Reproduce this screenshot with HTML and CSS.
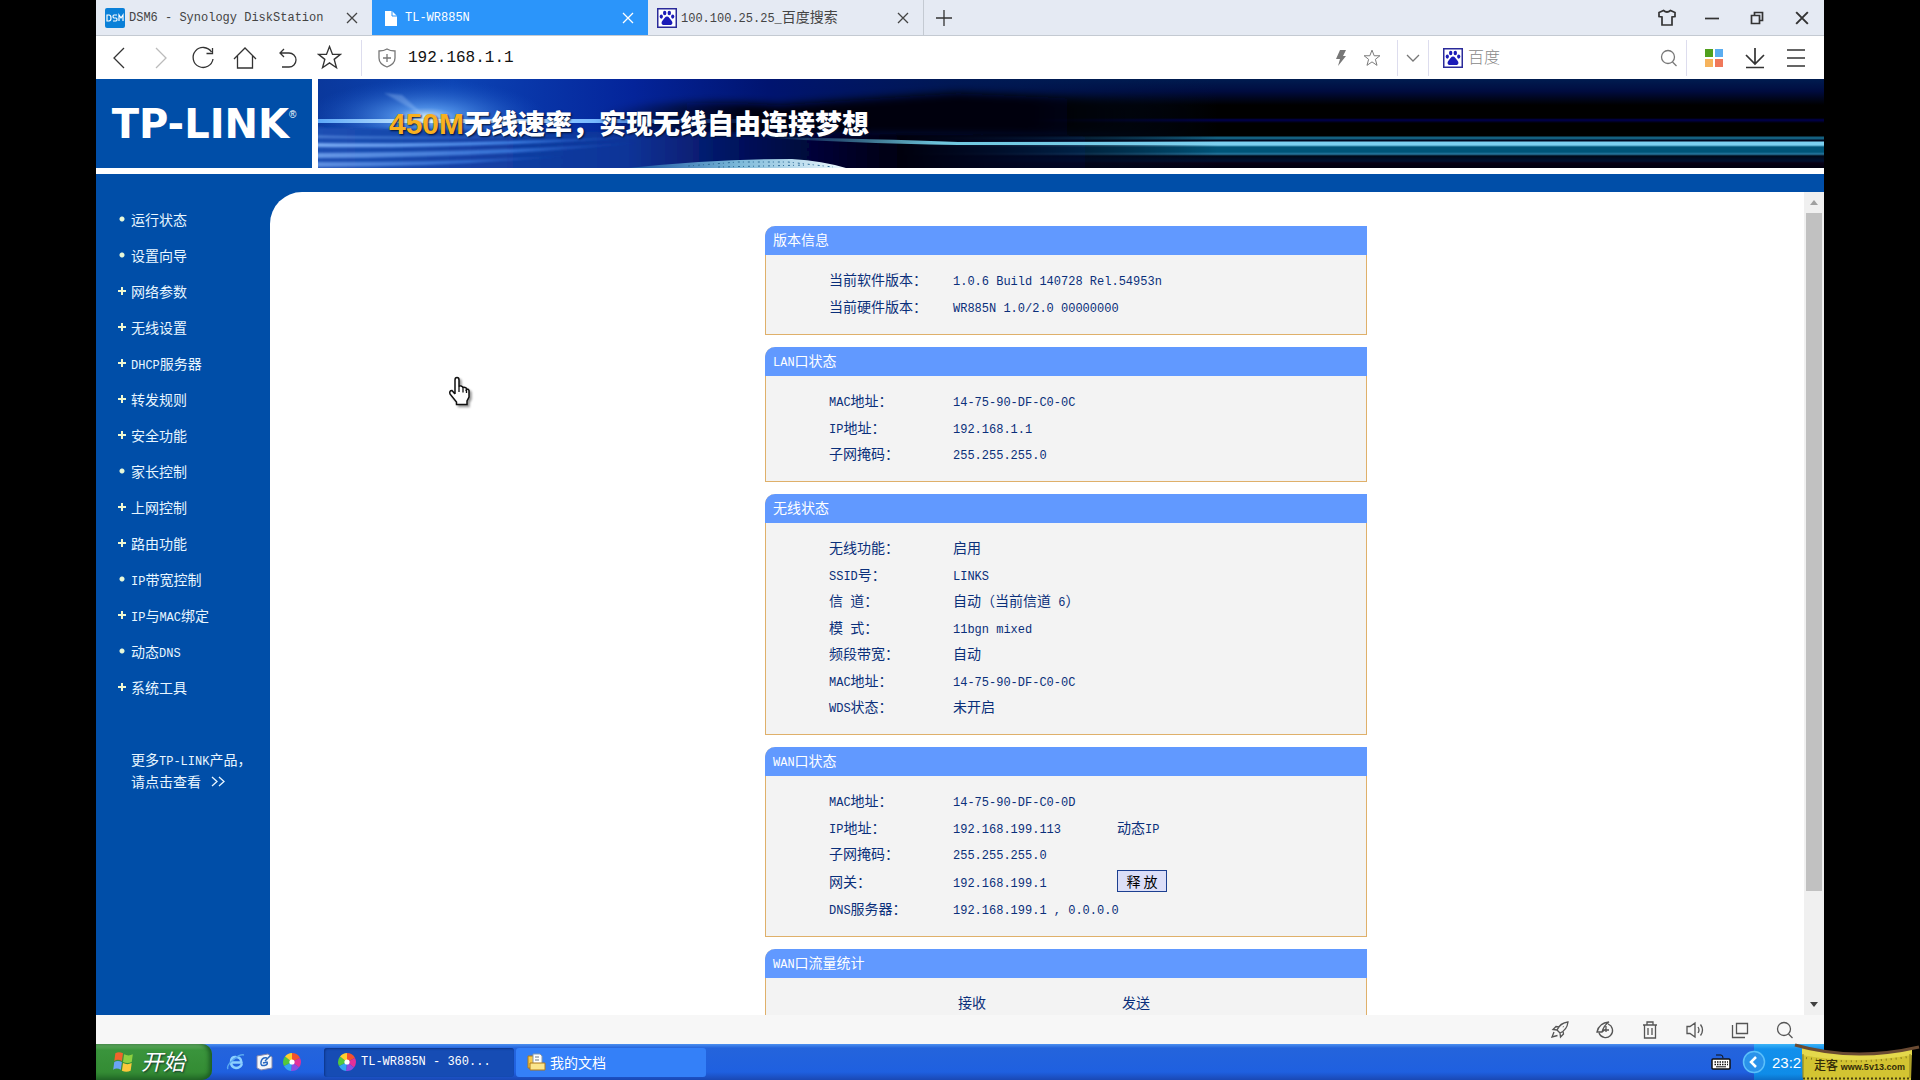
FILE: index.html
```html
<!DOCTYPE html>
<html lang="zh-CN">
<head>
<meta charset="utf-8">
<title>TL-WR885N</title>
<link rel="stylesheet" href="styles.css">
</head>
<body>
<svg width="0" height="0" class="defs" aria-hidden="true">
  <defs>
    <symbol id="close" viewBox="0 0 12 12"><path d="M1 1L11 11M11 1L1 11"/></symbol>
    <symbol id="star" viewBox="0 0 24 24"><path d="M12 1.500L14.900 9H22.500L16.500 13.800L18.700 21.800L12 17.200L5.300 21.800L7.500 13.800L1.500 9H9.100Z"/></symbol>
    <symbol id="paw" viewBox="0 0 20 20"><rect x=".75" y=".75" width="18.500" height="18.500" fill="#fff" stroke="#2a2a9a" stroke-width="1.500"/><g fill="#1b1bb8"><ellipse cx="7.700" cy="5" rx="1.700" ry="2.300"/><ellipse cx="12.300" cy="5" rx="1.700" ry="2.300"/><ellipse cx="4.300" cy="8.600" rx="1.600" ry="2.100"/><ellipse cx="15.700" cy="8.600" rx="1.600" ry="2.100"/><path d="M10 8.500C12 8.500 12.500 10.500 14 12C16.500 14.500 15.500 17.500 12.500 17H7.500C4.500 17.500 3.500 14.500 6 12C7.500 10.500 8 8.500 10 8.500Z"/></g></symbol>
    <symbol id="search" viewBox="0 0 18 18"><circle cx="8" cy="8" r="6.500"/><path d="M12.500 13L16.500 17"/></symbol>
    <symbol id="wheel" viewBox="0 0 20 20"><path d="M10 10L10 1A9 9 0 0 1 18 6Z" fill="#f3512d"/><path d="M10 10L18 6A9 9 0 0 1 17 15.500Z" fill="#e3309a"/><path d="M10 10L17 15.500A9 9 0 0 1 9 19Z" fill="#8e4be0"/><path d="M10 10L9 19A9 9 0 0 1 2 14Z" fill="#35a4f3"/><path d="M10 10L2 14A9 9 0 0 1 3 4.500Z" fill="#54c83a"/><path d="M10 10L3 4.500A9 9 0 0 1 10 1Z" fill="#ffcf2e"/><circle cx="10" cy="10" r="2.600" fill="#fff"/></symbol>
  </defs>
</svg>

<div class="screen">
  <header class="tabstrip">
    <div class="tab">
      <svg class="tab-icon" viewBox="0 0 20 20"><rect width="20" height="20" rx="2" fill="#0a80d8"/><path d="M2 7V13H4Q6 13 6 10T4 7ZM12 7H9Q8 7 8 8.500T9 10H11Q12 10 12 11.500T11 13H8M14 13V7L16 10L18 7V13" fill="none" stroke="#fff" stroke-width="1.200"/></svg>
      <span class="tab-title">DSM6 - Synology DiskStation</span>
      <button class="tab-close" aria-label="关闭"><svg class="line" viewBox="0 0 12 12"><use href="#close"/></svg></button>
    </div>
    <div class="tab active">
      <svg class="tab-icon" viewBox="0 0 20 20"><path d="M4 3H11L16 8V18H4Z" fill="#fff"/><path d="M11 3V8H16" fill="none" stroke="#2b95fa"/></svg>
      <span class="tab-title">TL-WR885N</span>
      <button class="tab-close" aria-label="关闭"><svg class="line" viewBox="0 0 12 12"><use href="#close"/></svg></button>
    </div>
    <div class="tab last">
      <svg class="tab-icon" viewBox="0 0 20 20"><use href="#paw"/></svg>
      <span class="tab-title">100.100.25.25_<span class="han">百度搜索</span></span>
      <button class="tab-close" aria-label="关闭"><svg class="line" viewBox="0 0 12 12"><use href="#close"/></svg></button>
    </div>
    <button class="new-tab" aria-label="新标签页"><svg class="line" width="16" height="16" viewBox="0 0 16 16"><path d="M8 0V16M0 8H16"/></svg></button>
    <div class="window-buttons">
      <button aria-label="皮肤"><svg class="line bold" width="18" height="18" viewBox="0 0 18 18"><path d="M5.500 1.500Q9 4.500 12.500 1.500L17 3.500V7.500L14 8V16H4V8L1 7.500V3.500Z"/></svg></button>
      <button aria-label="最小化"><svg class="line bold" width="16" height="16" viewBox="0 0 16 16"><path d="M1 8.500H15"/></svg></button>
      <button aria-label="还原"><svg class="line bold" width="14" height="14" viewBox="0 0 14 14"><path d="M1.500 4.500H9.500V12.500H1.500ZM4.500 4V1.500H12.500V9.500H10"/></svg></button>
      <button aria-label="关闭窗口"><svg class="line bold" width="14" height="14" viewBox="0 0 12 12"><use href="#close"/></svg></button>
    </div>
  </header>

  <div class="toolbar">
    <div class="nav">
      <button aria-label="后退"><svg class="line" width="24" height="24" viewBox="0 0 24 24"><path d="M17 2L7 12L17 22"/></svg></button>
      <button class="dim" aria-label="前进"><svg class="line" width="24" height="24" viewBox="0 0 24 24"><path d="M7 2L17 12L7 22"/></svg></button>
      <button aria-label="刷新"><svg class="line" width="24" height="24" viewBox="0 0 24 24"><path d="M20.500 6A10 10 0 1 0 22 13M21.500 2V7.500H15.500"/></svg></button>
      <button aria-label="主页"><svg class="line" width="24" height="24" viewBox="0 0 24 24"><path d="M1 13L12 2L23 13M4.500 10V22H19.500V10"/></svg></button>
      <button aria-label="撤销"><svg class="line" width="24" height="24" viewBox="0 0 24 24"><path d="M9 3L5 7L9 11M5 7H14A7 7 0 0 1 14 21H7"/></svg></button>
      <button aria-label="收藏"><svg class="line" width="25" height="25" viewBox="0 0 24 24"><use href="#star"/></svg></button>
    </div>
    <div class="address">
      <svg class="line grey" width="18" height="20" viewBox="0 0 18 20"><path d="M9 1Q12 3 17 3V10Q17 16 9 19Q1 16 1 10V3Q6 3 9 1ZM9 6V14M5 10H13"/></svg>
      <input class="url" type="text" value="192.168.1.1" aria-label="地址">
      <button class="grey" aria-label="极速模式"><svg width="12" height="18" viewBox="0 0 12 18"><path d="M5 1H11L8 7H11L3 17L5 10H1Z" fill="#777"/></svg></button>
      <button class="grey" aria-label="加入收藏"><svg class="line" width="18" height="18" viewBox="0 0 24 24"><use href="#star"/></svg></button>
    </div>
    <button class="dropdown grey" aria-label="展开"><svg class="line" width="14" height="8" viewBox="0 0 14 8"><path d="M1 1L7 7L13 1"/></svg></button>
    <div class="searchbox">
      <svg width="20" height="20" viewBox="0 0 20 20"><use href="#paw"/></svg>
      <input class="query" type="text" placeholder="百度" aria-label="搜索">
      <button class="grey" aria-label="搜索"><svg class="line" width="18" height="18" viewBox="0 0 18 18"><use href="#search"/></svg></button>
    </div>
    <div class="tools">
      <button aria-label="扩展"><svg width="20" height="20" viewBox="0 0 20 20"><path d="M1 1H9V9H1Z" fill="#50a01e"/><path d="M11 1H19V9H11Z" fill="#5badf0"/><path d="M1 11H9V19H1Z" fill="#f6b35c"/><path d="M11 11H19V19H11Z" fill="#f0785a"/></svg></button>
      <button aria-label="下载"><svg class="line bold" width="20" height="22" viewBox="0 0 20 22"><path d="M10 1V17M1 8L10 17L19 8M1 20.500H19"/></svg></button>
      <button aria-label="菜单"><svg class="line bold" width="20" height="20" viewBox="0 0 20 20"><path d="M1 2H19M1 10H19M1 18H19"/></svg></button>
    </div>
  </div>

  <div class="brand">
    <div class="logo">TP-LINK<sup>®</sup></div>
    <div class="banner">
      <svg class="banner-art" width="900" height="89" viewBox="0 0 900 89">
        <defs>
          <linearGradient id="sky" x2="1"><stop offset="0" stop-color="#0a389c"/><stop offset=".15" stop-color="#0c44b4"/><stop offset=".35" stop-color="#04249a"/><stop offset=".5" stop-color="#001470"/><stop offset=".7" stop-color="#001858" stop-opacity=".8"/><stop offset="1" stop-color="#001c50" stop-opacity="0"/></linearGradient>
          <linearGradient id="night" x2="1"><stop offset="0" stop-color="#000010" stop-opacity="0"/><stop offset=".25" stop-color="#000008"/><stop offset=".7" stop-color="#000008"/><stop offset="1" stop-color="#000008" stop-opacity="0"/></linearGradient>
          <linearGradient id="sea" x2="1"><stop offset="0" stop-color="#1c50b4"/><stop offset=".35" stop-color="#0c3498"/><stop offset=".5" stop-color="#020a50"/><stop offset=".65" stop-color="#000010"/><stop offset="1" stop-color="#000010" stop-opacity="0"/></linearGradient>
          <linearGradient id="wave" x2="1"><stop offset="0" stop-color="#7cacf4"/><stop offset=".6" stop-color="#3c7ce0"/><stop offset="1" stop-color="#1c50c0" stop-opacity="0"/></linearGradient>
          <linearGradient id="teal" x2="1"><stop offset="0" stop-color="#50b0d0" stop-opacity="0"/><stop offset=".4" stop-color="#70c8e0"/><stop offset="1" stop-color="#7cd0f0"/></linearGradient>
          <radialGradient id="glow"><stop offset="0" stop-color="#d8f0ff"/><stop offset=".25" stop-color="#5a9df0" stop-opacity=".8"/><stop offset="1" stop-color="#1650c0" stop-opacity="0"/></radialGradient>
          <linearGradient id="beam" x2="1"><stop offset="0" stop-color="#5ca8f8"/><stop offset=".25" stop-color="#d8f2ff"/><stop offset=".6" stop-color="#78b8ff"/><stop offset="1" stop-color="#2050c0" stop-opacity="0"/></linearGradient>
          <linearGradient id="sand" x2="1"><stop offset="0" stop-color="#1450a0"/><stop offset=".5" stop-color="#7ab8d8"/><stop offset="1" stop-color="#f0faff"/></linearGradient>
          <filter id="soft" x="-5%" y="-30%" width="110%" height="160%"><feGaussianBlur stdDeviation="4"/></filter>
          <filter id="haze" x="-5%" y="-30%" width="110%" height="160%"><feGaussianBlur stdDeviation="1"/></filter>
        </defs>
        <rect width="900" height="89" fill="url(#sky)"/>
        <path d="M280 34Q360 18 460 26L640 14Q760 20 900 24V56H280Z" fill="url(#night)" filter="url(#soft)"/>
        <ellipse cx="108" cy="38" rx="120" ry="38" fill="url(#glow)"/>
        <path d="M66 14L108 38L84 16Z" fill="#b0d4ff" opacity=".3" filter="url(#haze)"/>
        <path d="M-9 48Q150 52 420 54L900 57V99H-9Z" fill="url(#sea)" filter="url(#haze)"/>
        <g fill="url(#wave)" filter="url(#haze)">
          <path d="M-9 64Q120 66 340 57Q150 70 -9 68Z"/>
          <path d="M-9 74Q150 74 330 63Q180 79 -9 79Z" opacity=".8"/>
          <path d="M-9 83Q120 84 260 76Q120 89 -9 88Z" opacity=".7"/>
          <path d="M-9 56Q160 60 300 54Q160 62 -9 59Z" opacity=".5"/>
        </g>
        <rect y="40" width="460" height="4" fill="url(#beam)"/>
        <path d="M440 58Q560 60 640 63H900V66H640Q520 64 440 58Z" fill="url(#teal)"/>
        <path d="M310 89Q400 80 474 80Q505 82 528 89Z" fill="url(#sand)"/>
        <path d="M370 87L420 83L470 83L515 88M400 88L490 86" stroke="#2d6c98" stroke-dasharray="2 3 1 4" fill="none"/>
      </svg>
      <p class="slogan"><span class="speed">450M</span>无线速率，实现无线自由连接梦想</p>
    </div>
  </div>
  <div class="blue-bar"></div>

  <div class="workspace">
    <nav class="sidebar">
      <ul class="menu">
        <li><a class="dot" href="#">运行状态</a></li>
        <li><a class="dot" href="#">设置向导</a></li>
        <li><a class="plus" href="#">网络参数</a></li>
        <li><a class="plus" href="#">无线设置</a></li>
        <li><a class="plus" href="#"><span><span class="lat">DHCP</span>服务器</span></a></li>
        <li><a class="plus" href="#">转发规则</a></li>
        <li><a class="plus" href="#">安全功能</a></li>
        <li><a class="dot" href="#">家长控制</a></li>
        <li><a class="plus" href="#">上网控制</a></li>
        <li><a class="plus" href="#">路由功能</a></li>
        <li><a class="dot" href="#"><span><span class="lat">IP</span>带宽控制</span></a></li>
        <li><a class="plus" href="#"><span><span class="lat">IP</span>与<span class="lat">MAC</span>绑定</span></a></li>
        <li><a class="dot" href="#"><span>动态<span class="lat">DNS</span></span></a></li>
        <li><a class="plus" href="#">系统工具</a></li>
      </ul>
      <a class="more" href="#">更多<span class="lat">TP-LINK</span>产品，<br>请点击查看<svg class="line" width="15" height="11" viewBox="0 0 15 11"><path d="M1 1L6 5.500L1 10M8 1L13 5.500L8 10"/></svg></a>
    </nav>
    <main class="content">
      <div class="cards">
        <section class="card">
          <h2>版本信息</h2>
          <table>
            <tr><th scope="row">当前软件版本：</th><td colspan="2"><span class="lat">1.0.6 Build 140728 Rel.54953n</span></td></tr>
            <tr><th scope="row">当前硬件版本：</th><td colspan="2"><span class="lat">WR885N 1.0/2.0 00000000</span></td></tr>
          </table>
        </section>
        <section class="card">
          <h2><span class="lat">LAN</span>口状态</h2>
          <table>
            <tr><th scope="row"><span class="lat">MAC</span>地址：</th><td colspan="2"><span class="lat">14-75-90-DF-C0-0C</span></td></tr>
            <tr><th scope="row"><span class="lat">IP</span>地址：</th><td colspan="2"><span class="lat">192.168.1.1</span></td></tr>
            <tr><th scope="row">子网掩码：</th><td colspan="2"><span class="lat">255.255.255.0</span></td></tr>
          </table>
        </section>
        <section class="card">
          <h2>无线状态</h2>
          <table>
            <tr><th scope="row">无线功能：</th><td colspan="2">启用</td></tr>
            <tr><th scope="row"><span class="lat">SSID</span>号：</th><td colspan="2"><span class="lat">LINKS</span></td></tr>
            <tr><th scope="row">信<span class="lat"> </span>道：</th><td colspan="2">自动（当前信道<span class="lat"> 6</span>）</td></tr>
            <tr><th scope="row">模<span class="lat"> </span>式：</th><td colspan="2"><span class="lat">11bgn mixed</span></td></tr>
            <tr><th scope="row">频段带宽：</th><td colspan="2">自动</td></tr>
            <tr><th scope="row"><span class="lat">MAC</span>地址：</th><td colspan="2"><span class="lat">14-75-90-DF-C0-0C</span></td></tr>
            <tr><th scope="row"><span class="lat">WDS</span>状态：</th><td colspan="2">未开启</td></tr>
          </table>
        </section>
        <section class="card">
          <h2><span class="lat">WAN</span>口状态</h2>
          <table>
            <tr><th scope="row"><span class="lat">MAC</span>地址：</th><td colspan="2"><span class="lat">14-75-90-DF-C0-0D</span></td></tr>
            <tr><th scope="row"><span class="lat">IP</span>地址：</th><td class="value"><span class="lat">192.168.199.113</span></td><td>动态<span class="lat">IP</span></td></tr>
            <tr><th scope="row">子网掩码：</th><td colspan="2"><span class="lat">255.255.255.0</span></td></tr>
            <tr><th scope="row">网关：</th><td class="value"><span class="lat">192.168.199.1</span></td><td><button class="release">释 放</button></td></tr>
            <tr><th scope="row"><span class="lat">DNS</span>服务器：</th><td colspan="2"><span class="lat">192.168.199.1 , 0.0.0.0</span></td></tr>
          </table>
        </section>
        <section class="card">
          <h2><span class="lat">WAN</span>口流量统计</h2>
          <table class="traffic">
            <tr><td class="blank"></td><th class="value" scope="col">接收</th><th scope="col">发送</th></tr>
          </table>
        </section>
      </div>
      <div class="scrollbar">
        <svg width="8" height="5" viewBox="0 0 8 5"><path d="M4 0L8 5H0Z" fill="#a0a0a0"/></svg>
        <div class="thumb"></div>
        <svg width="8" height="5" viewBox="0 0 8 5"><path d="M4 5L8 0H0Z" fill="#404040"/></svg>
      </div>
      <svg class="pointer" width="24" height="32" viewBox="0 0 24 32"><path d="M7 18V4Q7 1.500 9 1.500T11 4V11Q11 9.500 13 10T15 12Q15 11 17 11.500T18.500 13.500Q20 12.500 21 14.500V21L19 25V28.500H8.500V26L2 18Q1 14.500 4 14.500L7 18" fill="#fff" stroke="#111" stroke-width="1.500"/><path d="M11 11V16M15 12V16.500M18.500 13V17" stroke="#111" stroke-width="1.300"/></svg>
    </main>
  </div>

  <footer class="statusbar">
    <button aria-label="加速"><svg class="line" width="18" height="18" viewBox="0 0 18 18"><path d="M6 9Q9 2 17 1Q16 9 9 12ZM6 9L2 8.500L5 5.500L8 6M9 12L9.500 16L12.500 13L12 10M3 11L1 16L6.500 14.500M12 5.500L12.500 6"/></svg></button>
    <button aria-label="浏览加速"><svg class="line" width="18" height="18" viewBox="0 0 18 18"><path d="M1 11Q3 2 13 1Q8 4 6 11ZM12 3A7 7 0 1 1 3 12M6 11L10 8M10 5V11M7 9H13"/></svg></button>
    <button aria-label="清理"><svg class="line" width="16" height="18" viewBox="0 0 16 18"><path d="M1 4H15M5 4V1H11V4M2.500 4V17H13.500V4M6 7V14M10 7V14"/></svg></button>
    <button aria-label="声音"><svg class="line" width="18" height="18" viewBox="0 0 18 18"><path d="M1 5.500H4L9 2V16L4 12.500H1ZM12 6Q14 9 12 12M14.500 3.500Q18.500 9 14.500 14.500"/></svg></button>
    <button aria-label="多窗口"><svg class="line" width="18" height="18" viewBox="0 0 18 18"><path d="M5.500 2.500H16.500V12.500H5.500ZM1.500 4V16.500H14"/></svg></button>
    <button aria-label="缩放"><svg class="line" width="18" height="18" viewBox="0 0 18 18"><use href="#search"/></svg></button>
  </footer>

  <div class="taskbar">
    <button class="start">
      <svg width="24" height="24" viewBox="0 0 22 22"><path d="M4 3Q7 1 11 3L10 10Q6 8 3 10Z" fill="#f0642c"/><path d="M12 4Q16 6 20 4L19 11Q15 13 11 11Z" fill="#8ed040"/><path d="M3 11Q6 9 10 11L9 18Q5 16 2 18Z" fill="#6aa4f4"/><path d="M11 12Q15 14 19 12L18 19Q14 21 10 19Z" fill="#fac83c"/></svg>
      <span>开始</span>
    </button>
    <div class="quick">
      <button aria-label="Internet Explorer"><svg width="20" height="20" viewBox="0 0 20 20"><path d="M16 12Q14 16 10 16Q5 15.500 5 10T10 5Q15 5 15.500 10.500H6" fill="none" stroke="#8cd0ff" stroke-width="2.500"/><path d="M2 17Q0 14 7 8T18 3" fill="none" stroke="#58a8f0" stroke-width="1.500"/></svg></button>
      <button aria-label="显示桌面"><svg width="20" height="20" viewBox="0 0 20 20"><path d="M3 4L14 2L18 5V16L7 18L3 16Z" fill="#f4f6fa" stroke="#88a"/><path d="M13 6Q8 5 7 10T12 13Q14 12 13 10L9 11M11 9L17 3" fill="none" stroke="#2868c0" stroke-width="1.500"/></svg></button>
      <button aria-label="360浏览器"><svg width="20" height="20" viewBox="0 0 20 20"><use href="#wheel"/></svg></button>
    </div>
    <button class="task pressed"><svg width="20" height="20" viewBox="0 0 20 20"><use href="#wheel"/></svg><span class="lat">TL-WR885N - 360...</span></button>
    <button class="task"><svg width="20" height="20" viewBox="0 0 20 20"><path d="M2 4H9V16H2Z" fill="#f7c948" stroke="#b07818"/><path d="M7 2H14L16 4V12H7Z" fill="#fff" stroke="#89a"/><path d="M4 11H19V18H4Z" fill="#fbe58c" stroke="#b07818"/><path d="M9 5H13M9 8H13" stroke="#678"/></svg><span>我的文档</span></button>
    <svg class="keyboard" width="20" height="16" viewBox="0 0 20 16"><path d="M5 1H10Q12 1 12 4" fill="none" stroke="#111"/><rect x="1" y="5" width="18" height="10" rx="1" fill="#fff" stroke="#111" stroke-width="1.500"/><path d="M3.500 8H17M3.500 10.500H17" stroke="#111" stroke-width="1.500" stroke-dasharray="1.500 1"/><path d="M5 12.800H15" stroke="#111"/></svg>
    <div class="tray">
      <button class="expand" aria-label="显示隐藏的图标"><svg width="24" height="24" viewBox="0 0 24 24"><circle cx="12" cy="12" r="10.500" fill="#2a92ea" stroke="#5cc0fa" stroke-width="1.500"/><path d="M14 7L9 12L14 17" fill="none" stroke="#fff" stroke-width="2.500"/></svg></button>
      <span>23:2</span>
    </div>
  </div>
</div>

<div class="watermark">
  <svg class="cloth" width="126" height="37" viewBox="0 0 126 37"><path d="M8 5Q60 16 118 5L117 37H9Z" fill="#d3c432"/><path d="M8 6Q60 17 118 6V12Q60 22 8 12Z" fill="#e4d84c"/><path d="M9 35.500H117" stroke="#4a4210" stroke-width="2" stroke-dasharray="2 2"/><path d="M9 11V35M116 11V35" stroke="#8a7e1c"/><path d="M12 15Q60 22 114 14" fill="none" stroke="#8a7e1c" stroke-dasharray="1 4" stroke-width="2"/><path d="M1 2Q60 19 125 4" fill="none" stroke="#6a4a32" stroke-width="3"/></svg>
  <p>走客 <b>www.5v13.com</b></p>
</div>
</body>
</html>
```
FILE: styles.css
```css
* {
  box-sizing: border-box;
}

body {
  height: 100vh;
  margin: 0;
  padding: 0 5%;
  overflow: hidden;
  background: #000;
  font: 14px/20px "Noto Sans CJK SC", sans-serif;
  color: #333;
}

.defs {
  position: absolute;
}

button {
  display: flex;
  align-items: center;
  justify-content: center;
  padding: 0;
  border: 0;
  background: none;
  color: inherit;
  font: inherit;
}

input {
  min-width: 0;
  padding: 0;
  border: 0;
  outline: 0;
  background: none;
}

p,
h2,
ul {
  margin: 0;
  padding: 0;
}

a {
  color: inherit;
  text-decoration: none;
}

.line {
  fill: none;
  stroke: currentColor;
  stroke-width: 1.3;
}

.bold {
  stroke-width: 1.7;
}

.grey {
  color: #777;
}

.lat,
.tab-title {
  font-family: "Liberation Mono", monospace;
  font-size: 12px;
  white-space: pre;
}

.lat {
  line-height: 14px;
}

.han {
  font-family: "Noto Sans CJK SC", sans-serif;
  font-size: 14px;
}

.screen {
  display: flex;
  flex-direction: column;
  height: 100%;
  background: #fff;
}

/* Browser tabs */
.tabstrip {
  display: flex;
  flex: 0 0 36px;
  background: #e5eaf3;
  border-bottom: 1px solid #c4cad2;
}

.tab {
  display: flex;
  flex: 0 1 276px;
  align-items: center;
  gap: 4px;
  padding: 0 14px 0 9px;
  color: #444;
}

.tab.active {
  background: #2b95fa;
  color: #fff;
}

.tab.last {
  border-right: 1px solid #c4cad2;
}

.tab-icon {
  width: 20px;
  height: 20px;
}

.tab-title {
  flex: 1;
}

.tab-close svg {
  width: 12px;
  height: 12px;
}

.new-tab {
  width: 40px;
}

.window-buttons {
  display: flex;
  margin-left: auto;
}

.window-buttons button {
  width: 45px;
}

/* Address bar */
.toolbar {
  display: flex;
  flex: 0 0 43px;
  align-items: center;
}

.nav {
  display: flex;
  justify-content: space-between;
  width: 265px;
  padding: 0 19px 0 11px;
}

.dim {
  color: #bbb;
}

.address,
.searchbox,
.dropdown {
  display: flex;
  align-items: center;
  height: 36px;
  border-left: 1px solid #dde;
}

.address {
  flex: 1;
  gap: 16px;
  padding: 0 16px;
}

.url {
  flex: 1;
  margin-left: -4px;
  font: 16px "Liberation Mono", monospace;
  color: #111;
}

.dropdown {
  width: 31px;
}

.searchbox {
  gap: 5px;
  width: 259px;
  padding: 0 8px 0 14px;
  border-right: 1px solid #dde;
}

.query {
  flex: 1;
  height: 24px;
  margin-bottom: 4px;
  font: 300 16px/24px "Noto Sans CJK SC", sans-serif;
}

.query::placeholder {
  color: #888;
}

.tools {
  display: flex;
  justify-content: space-between;
  width: 137px;
  padding: 0 18px 0 17px;
}

/* Router page header */
.brand {
  display: flex;
  flex: 0 0 89px;
  gap: 6px;
}

.logo {
  display: flex;
  align-items: center;
  justify-content: center;
  width: 216px;
  background: #004ea8;
  color: #fff;
  font: bold 40px "DejaVu Sans", sans-serif;
}

.logo sup {
  align-self: flex-start;
  margin-top: 30px;
  font: 10px "Liberation Sans", sans-serif;
}

.banner {
  position: relative;
  display: flex;
  flex: 1;
  align-items: center;
  overflow: hidden;
  background: linear-gradient(#001c50 0, #000c40 12px, #000 26px, #000 39px, #000050 41px, #000 44px, #000 57px, #146080 58px, #146080 60px, #000820 61px, #000820 62px, #7cd0f0 63px, #7cd0f0 66px, #005478 68px, #005478 73px, #2878a0 75px, #000818 77px, #001030 82px, #080014 84px, #001 88px);
}

.banner-art {
  position: absolute;
  inset: 0 auto 0 0;
}

.slogan {
  position: relative;
  padding-left: 71px;
  color: #fff;
  font-size: 27px;
  font-weight: 900;
  line-height: 40px;
  text-shadow: 1px 1px 2px #013;
  white-space: nowrap;
}

.speed {
  color: #f8b020;
  font-family: "Liberation Sans", sans-serif;
  font-size: 30px;
}

.blue-bar {
  flex: 0 0 18px;
  margin-top: 6px;
  background: #004ea8;
}

/* Router page body */
.workspace {
  display: flex;
  flex: 1;
  min-height: 0;
  background: #004ea8;
}

.sidebar {
  width: 174px;
  padding: 9px 0 0 24px;
  color: #e8f6ff;
}

.menu {
  margin-bottom: 43px;
  list-style: none;
}

.menu a {
  display: flex;
  align-items: center;
  height: 36px;
}

.menu a::before {
  content: "";
  width: 8px;
  height: 8px;
  margin-right: 5px;
  margin-left: -2px;
}

.menu .dot::before {
  background: radial-gradient(circle, #e8f8d8 2px, transparent 3px);
}

.menu .plus::before {
  background:
    linear-gradient(#f0f8d0, #f0f8d0) center / 8px 2px no-repeat,
    linear-gradient(#f0f8d0, #f0f8d0) center / 2px 8px no-repeat;
}

.more {
  display: block;
  padding-left: 11px;
  line-height: 22px;
  white-space: nowrap;
}

.more svg {
  margin-left: 10px;
}

.content {
  position: relative;
  display: flex;
  flex: 1;
  overflow: hidden;
  border-top-left-radius: 32px;
  background: #fff;
}

.cards {
  display: flex;
  flex: 1;
  flex-direction: column;
  align-items: center;
  gap: 12px;
  padding: 34px 0 0 58px;
}

.card {
  flex: none;
  width: 602px;
  border: 1px solid #dfb06a;
  border-top: 0;
  border-top-left-radius: 10px;
  background: #f3f3f3;
  color: #0a2f7a;
}

.card h2 {
  height: 29px;
  margin: 0 -1px;
  padding: 0 8px;
  border-top-left-radius: 10px;
  background: #6199ff;
  color: #fff;
  font-size: 14px;
  font-weight: 400;
  line-height: 26px;
}

.card table {
  width: 100%;
  margin: 11px 0 15px;
  border-collapse: collapse;
  table-layout: auto;
}

.card tr {
  height: 26px;
}

.card tr:nth-child(even) {
  height: 27px;
}

.card th,
.card td {
  padding: 0;
  font-weight: 400;
  text-align: left;
  white-space: nowrap;
}

.card th:first-child,
.card .blank {
  width: 187px;
  padding-left: 63px;
}

.card .value {
  width: 164px;
}

.card .traffic th {
  padding-left: 5px;
}

.release {
  width: 50px;
  height: 22px;
  margin: 4px 0 3px;
  border: 1px solid #1c3f90;
  background: #dcdff8;
  color: #000;
  line-height: 20px;
}

.scrollbar {
  display: flex;
  flex-direction: column;
  align-items: center;
  gap: 8px;
  width: 20px;
  padding: 8px 0;
  background: #f0f0f0;
}

.thumb {
  width: 16px;
  height: 84%;
  margin-bottom: auto;
  background: #c1c1c1;
}

.pointer {
  position: absolute;
  top: 184px;
  left: 178px;
  filter: drop-shadow(2px 2px 1px #999);
}

/* Browser status bar */
.statusbar {
  display: flex;
  flex: 0 0 29px;
  justify-content: flex-end;
  padding-right: 17px;
  background: #f7f7f7;
  color: #555;
}

.statusbar button {
  width: 45px;
}

/* Desktop taskbar */
.taskbar {
  display: flex;
  flex: 0 0 36px;
  align-items: center;
  background: linear-gradient(#4c90f0 0, #2464dc 4px, #1f60e0 28px, #1a48b4 36px);
  color: #fff;
}

.start {
  gap: 6px;
  width: 116px;
  height: 36px;
  padding-right: 12px;
  border-radius: 0 10px 10px 0;
  background: linear-gradient(#6cb46c 0, #3a943c 6px, #348c34 28px, #246c28 36px);
  box-shadow: inset -3px 0 4px #1c5c24;
  font-size: 22px;
  font-style: italic;
  text-shadow: 1px 1px 2px #133;
}

.start span {
  padding-bottom: 4px;
}

.quick {
  display: flex;
  gap: 8px;
  width: 112px;
  padding-left: 14px;
}

.task {
  flex: 0 1 190px;
  justify-content: flex-start;
  gap: 4px;
  height: 29px;
  margin-right: 2px;
  padding: 0 10px;
  border-radius: 3px;
  background: #3480f8;
}

.task.pressed {
  padding-left: 13px;
  background: #164cb4;
  box-shadow: inset 1px 1px 2px #0c3488;
}

.keyboard {
  margin: 0 23px 0 auto;
}

.tray {
  display: flex;
  align-items: center;
  gap: 6px;
  width: 70px;
  height: 36px;
  background: linear-gradient(#3cb4f8 0, #1290ec 5px, #0f8ce8 30px, #0c70c8 36px);
  font: 15px "Liberation Sans", sans-serif;
}

.expand {
  margin-left: -12px;
}

/* Corner watermark */
.watermark {
  position: absolute;
  right: 0;
  bottom: 0;
  width: 126px;
  height: 37px;
}

.cloth {
  position: absolute;
}

.watermark p {
  position: relative;
  padding: 12px 0 0 20px;
  color: #332c08;
  font-size: 12px;
  font-weight: 500;
  white-space: nowrap;
}

.watermark b {
  font: bold 9px "Liberation Sans", sans-serif;
}
```
